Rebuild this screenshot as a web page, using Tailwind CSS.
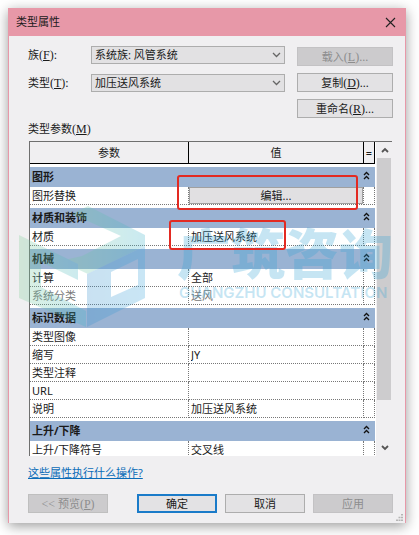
<!DOCTYPE html>
<html lang="zh-CN">
<head>
  <meta charset="UTF-8">
  <meta name="viewport" content="width=device-width, initial-scale=1">
  <title>类型属性</title>
  <script src="https://cdn.jsdelivr.net/npm/@tailwindcss/browser@4"></script>
</head>
<body class="bg-white pt-2 pl-2 pr-[13px] pb-3 font-['Noto_Sans','Noto_Sans_CJK_SC',sans-serif] text-[11px] leading-[18px] text-[#1a1a1a]">
  <main class="bg-[#f0eff1] border-x border-[#e798a8] shadow-[0_3px_12px_rgba(0,0,0,0.4)]">
    <!-- Barra de título -->
    <header class="flex items-center justify-between h-7 bg-[#e798a8] pl-[7px] pr-2">
      <h1>类型属性</h1>
      <button type="button" aria-label="关闭" class="p-px">
        <svg class="size-[11px]" viewBox="0 0 11 11" fill="none" stroke="#222" stroke-width="1.1"><path d="M1 1l9 9M10 1l-9 9"/></svg>
      </button>
    </header>

    <div class="pl-[19px] pr-3 pt-[10px] pb-[10px]">
      <!-- Familia y tipo -->
      <div class="flex gap-3">
        <div class="flex-1 flex flex-col gap-[10px]">
          <div class="flex items-center h-[18px]">
            <label for="familia" class="w-[63px] h-[18px]">族<span class="font-['Liberation_Serif',serif] text-[12px]">(<u>F</u>):</span></label>
            <div class="relative flex-1">
              <select id="familia" class="block w-full h-[18px] appearance-none bg-[#e2e1e3] border border-[#adadad] pl-[3px] leading-4">
                <option>系统族: 风管系统</option>
              </select>
              <svg class="absolute right-1 top-[6px] w-[9px] h-[6px] pointer-events-none" viewBox="0 0 9 6" fill="none" stroke="#666" stroke-width="1.3"><path d="M1 1l3.500 3.500L8 1"/></svg>
            </div>
          </div>
          <div class="flex items-center h-[18px]">
            <label for="tipo" class="w-[63px] h-[18px]">类型<span class="font-['Liberation_Serif',serif] text-[12px]">(<u>T</u>):</span></label>
            <div class="relative flex-1">
              <select id="tipo" class="block w-full h-[18px] appearance-none bg-[#e2e1e3] border border-[#adadad] pl-[3px] leading-4">
                <option>加压送风系统</option>
              </select>
              <svg class="absolute right-1 top-[6px] w-[9px] h-[6px] pointer-events-none" viewBox="0 0 9 6" fill="none" stroke="#666" stroke-width="1.3"><path d="M1 1l3.500 3.500L8 1"/></svg>
            </div>
          </div>
        </div>
        <div class="flex flex-col gap-[7px] w-24 pt-px">
          <button type="button" disabled class="h-[19px] leading-4 bg-[#cccbcd] border border-[#c3c2c4] text-[#8d8d8d]">载入<span class="font-['Liberation_Serif',serif] text-[12px]">(<u>L</u>)...</span></button>
          <button type="button" class="h-[19px] leading-4 bg-[#e3e2e4] border border-[#adadad]">复制<span class="font-['Liberation_Serif',serif] text-[12px]">(<u>D</u>)...</span></button>
          <button type="button" class="h-[19px] leading-4 bg-[#e3e2e4] border border-[#adadad]">重命名<span class="font-['Liberation_Serif',serif] text-[12px]">(<u>R</u>)...</span></button>
        </div>
      </div>

      <h2 class="h-[23px] pt-[2px]">类型参数<span class="font-['Liberation_Serif',serif] text-[12px]">(<u>M</u>)</span></h2>

      <!-- Tabla de parámetros con su barra de desplazamiento -->
      <div class="relative mx-px">
        <div class="flex h-[315px] overflow-hidden border-t border-l border-[#6f6f6f]">
          <div class="flex-1 bg-white">
            <table class="w-full table-fixed border-separate border-spacing-0">
              <colgroup>
                <col class="w-[159px]">
                <col>
                <col class="w-[11px]">
              </colgroup>
              <thead class="bg-[#f0eff1]">
                <tr>
                  <th class="h-[22px] font-normal border-r border-b border-black">参数</th>
                  <th class="font-normal border-r border-b border-black">值</th>
                  <th class="font-normal border-r border-b border-black">=</th>
                </tr>
              </thead>
              <tbody id="parametros"></tbody>
            </table>
          </div>
          <div class="flex flex-col w-[17px] pl-px border-l border-white bg-[#f0eff1]">
            <button type="button" aria-label="向上滚动" class="flex items-center justify-center h-4">
              <svg class="w-2 h-[6px]" viewBox="0 0 8 6" fill="none" stroke="#555" stroke-width="1.800"><path d="M1 5l3-3 3 3"/></svg>
            </button>
            <div class="flex-1 mr-px"><div class="h-[242px] bg-[#cdccce]"></div></div>
            <button type="button" aria-label="向下滚动" class="flex items-center justify-center h-4">
              <svg class="w-2 h-[6px]" viewBox="0 0 8 6" fill="none" stroke="#555" stroke-width="1.800"><path d="M1 1l3 3 3-3"/></svg>
            </button>
          </div>
        </div>

        <!-- Marca de agua -->
        <svg class="absolute -left-[10px] top-[65px] w-[374px] h-[124px] pointer-events-none" viewBox="19 206 374 124" aria-hidden="true">
          <defs>
            <linearGradient id="verde" x1="0" y1="0" x2="1" y2="0"><stop offset="0" stop-color="#7fcf95"/><stop offset="1" stop-color="#3fb3cc"/></linearGradient>
            <linearGradient id="azul" x1="0" y1="0" x2="1" y2="0"><stop offset="0" stop-color="#3a93cf"/><stop offset="1" stop-color="#3aa5dc"/></linearGradient>
          </defs>
          <g opacity="0.27">
            <path fill="url(#verde)" d="M72 214L88 206L145 235V246L88 274L60 261L82 256L121 236Z"/>
            <path fill="url(#verde)" d="M19 235L78 264V280L41 262V287L86 311V327L19 298Z"/>
            <path fill="url(#azul)" fill-rule="evenodd" d="M87 274L145 246V298L87 327ZM111 272V297L138 285V259Z"/>
            <g fill="#2fa3d6">
              <text x="177" y="275" font-family="Noto Sans CJK SC, sans-serif" font-size="54" font-weight="900">广筑咨询</text>
              <text x="179" y="298" font-family="Inter, sans-serif" font-size="15" font-weight="600">GUANGZHU CONSULTATION</text>
            </g>
          </g>
        </svg>

        <!-- Recuadros de resalte -->
        <div class="absolute left-[148px] top-[34px] w-[181px] h-[35px] border-2 border-[#e32a22] rounded-[3px] pointer-events-none"></div>
        <div class="absolute left-[140px] top-[79px] w-[117px] h-[30px] border-2 border-[#e32a22] rounded-[3px] pointer-events-none"></div>
      </div>

      <a href="#" class="inline-block mt-2 text-[#0a6cb8] underline">这些属性执行什么操作?</a>

      <!-- Botones inferiores -->
      <div class="flex gap-2 pt-3">
        <button type="button" disabled class="w-20 h-[19px] leading-4 bg-[#cccbcd] border border-[#bfbfbf] text-[#8d8d8d]"><span class="font-['Liberation_Serif',serif] text-[12px]">&lt;&lt; </span>预览<span class="font-['Liberation_Serif',serif] text-[12px]">(<u>P</u>)</span></button>
        <button type="button" class="w-20 h-[19px] ml-auto leading-[15px] bg-[#e3e2e4] border-2 border-[#1a7bc9]">确定</button>
        <button type="button" class="w-20 h-[19px] leading-4 bg-[#e3e2e4] border border-[#adadad]">取消</button>
        <button type="button" disabled class="w-20 h-[19px] leading-4 bg-[#cccbcd] border border-[#c3c2c4] text-[#8d8d8d]">应用</button>
      </div>
    </div>

    <!-- Tirador para cambiar el tamaño -->
    <div class="relative">
      <svg class="absolute right-[2px] bottom-[2px] size-[7px]" viewBox="0 0 7 7" fill="#b5b5b5"><path d="M5 0h2v1.500H5zM2.500 2.700h2v1.500h-2zM5 2.700h2v1.500H5zM0 5.400h2v1.500H0zM2.500 5.400h2v1.500h-2zM5 5.400h2v1.500H5z"/></svg>
    </div>
  </main>

  <script>
    // Grupos de parámetros y sus valores
    const grupos = [
      { titulo: '图形', filas: [{ nombre: '图形替换', boton: '编辑...' }] },
      { titulo: '材质和装饰', filas: [{ nombre: '材质', valor: '加压送风系统' }] },
      { titulo: '机械', filas: [
        { nombre: '计算', valor: '全部' },
        { nombre: '系统分类', valor: '送风', bloqueado: true }
      ] },
      { titulo: '标识数据', filas: [
        { nombre: '类型图像', valor: '' },
        { nombre: '缩写', valor: 'JY' },
        { nombre: '类型注释', valor: '' },
        { nombre: 'URL', valor: '' },
        { nombre: '说明', valor: '加压送风系统' }
      ] },
      { titulo: '上升/下降', filas: [{ nombre: '上升/下降符号', valor: '交叉线' }] }
    ];

    const celda = 'h-[18px] p-0 border-r border-b border-dotted border-[#777]';

    // Contenido de la celda de valor: botón o campo de texto
    function contenidoValor(fila) {
      if (fila.boton) {
        return `<button type="button" class="block w-full h-[17px] leading-[14px] bg-[#e1e0e2] border border-[#a0a0a0]">${fila.boton}</button>`;
      }
      return `<input type="text" value="${fila.valor}" aria-label="${fila.nombre}" ${fila.bloqueado ? 'disabled' : ''} class="block w-full h-[17px] pl-[2px] disabled:text-[#777]">`;
    }

    document.getElementById('parametros').innerHTML = grupos.map((grupo, i) => `
      <tr>
        <th colspan="2" class="h-[23px] p-0 pl-[2px] text-left font-bold bg-[#9ab3d3] border-t-3 border-white">${grupo.titulo}</th>
        <td class="p-0 bg-[#9ab3d3] border-t-3 border-white">
          <button type="button" data-grupo="${i}" aria-label="折叠${grupo.titulo}" class="block -ml-px pb-1">
            <svg class="w-[7px] h-[9px]" viewBox="0 0 7 9" fill="none" stroke="#111" stroke-width="1.300"><path d="M1 4l2.500-2.500L6 4M1 8l2.500-2.500L6 8"/></svg>
          </button>
        </td>
      </tr>
      ${grupo.filas.map(fila => `
        <tr data-fila="${i}">
          <td class="${celda} pl-[2px] ${fila.bloqueado ? 'text-[#777]' : ''}"><div class="h-[17px] leading-[17px]">${fila.nombre}</div></td>
          <td class="${celda}">${contenidoValor(fila)}</td>
          <td class="${celda}"></td>
        </tr>`).join('')}`).join('');

    // Plegar o desplegar un grupo
    document.querySelectorAll('[data-grupo]').forEach(boton => {
      boton.addEventListener('click', () => {
        document.querySelectorAll(`[data-fila="${boton.dataset.grupo}"]`).forEach(fila => {
          fila.classList.toggle('hidden');
        });
      });
    });
  </script>
</body>
</html>
